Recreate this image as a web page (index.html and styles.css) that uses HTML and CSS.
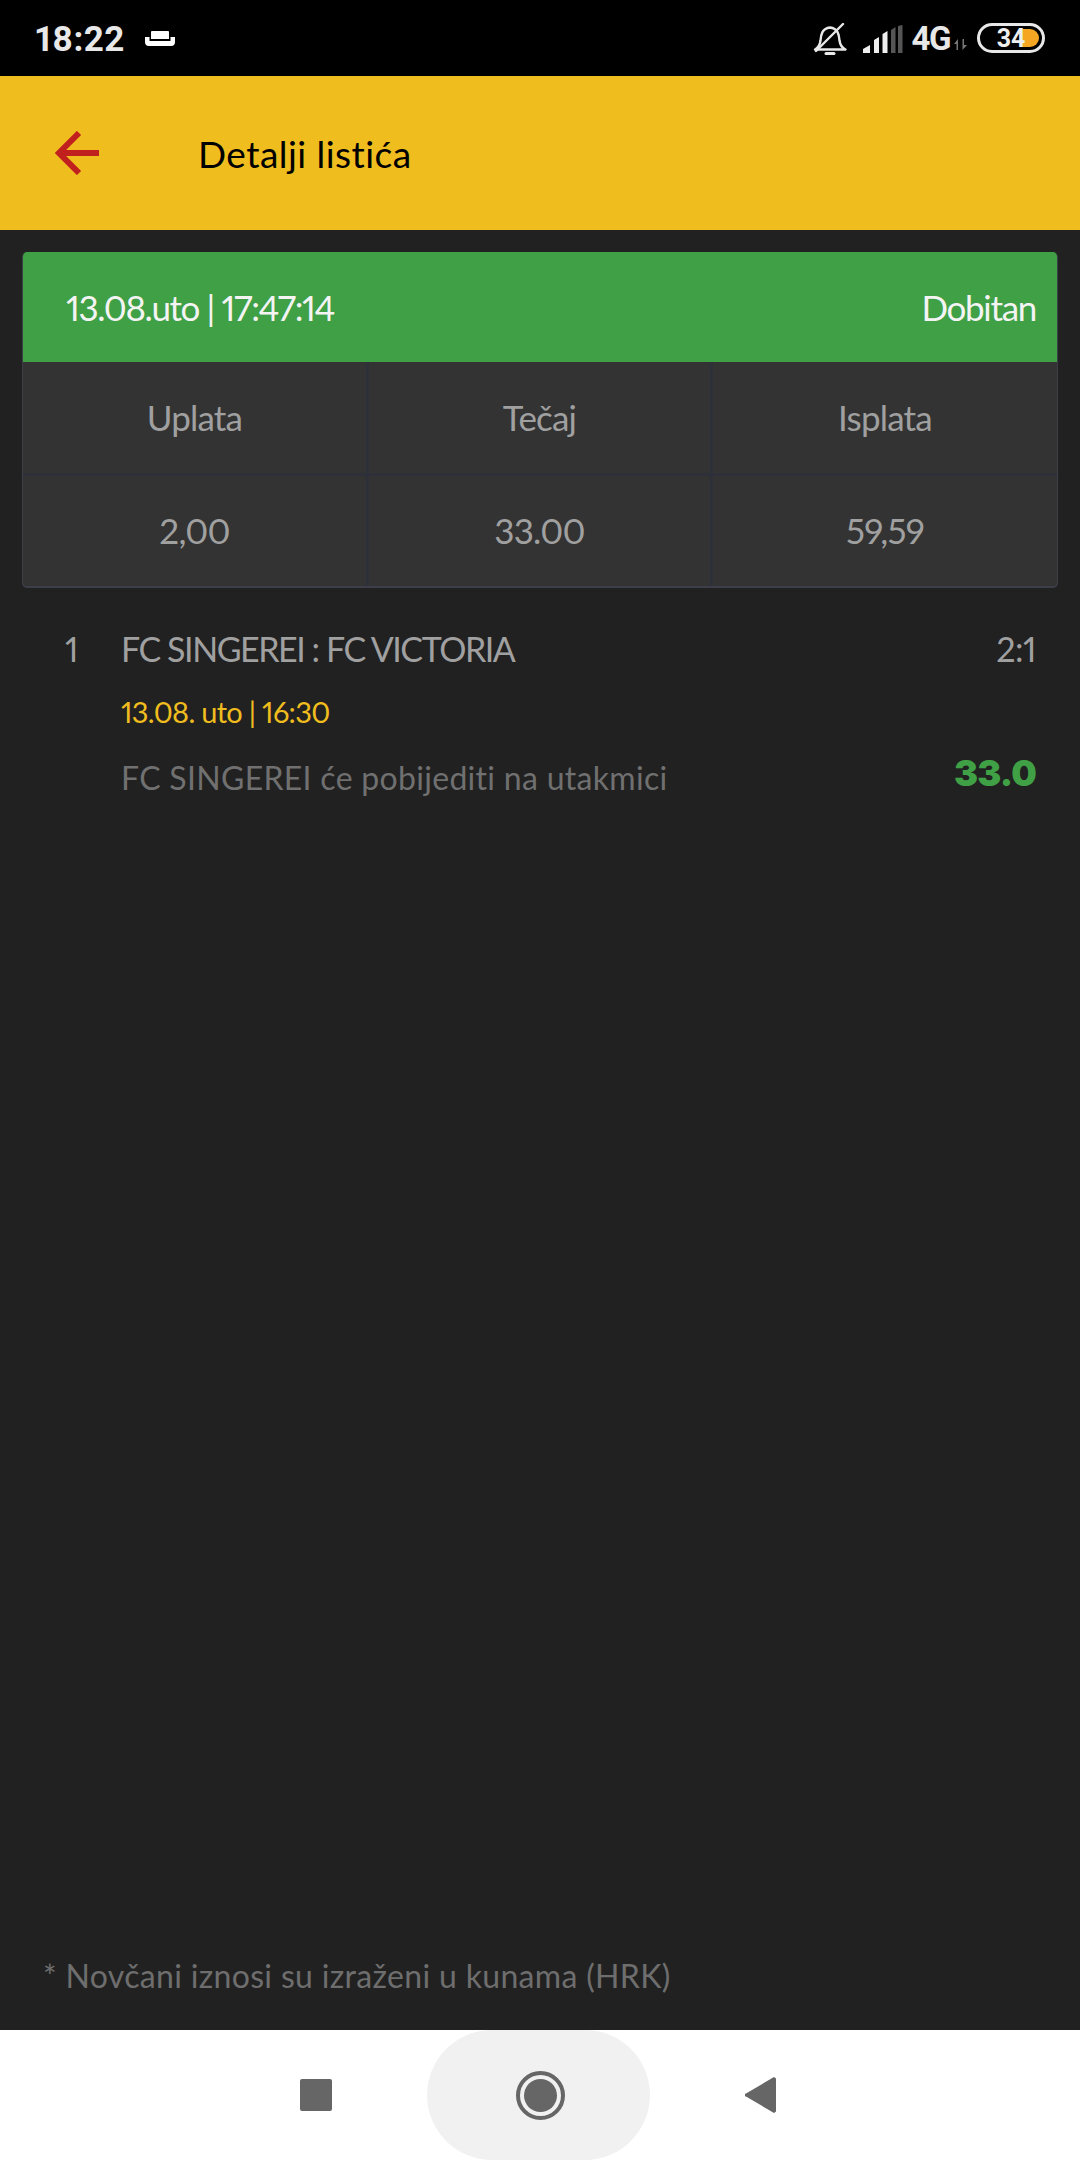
FILE: index.html
```html
<!DOCTYPE html>
<html lang="hr">
<head>
<meta charset="utf-8">
<title>Detalji listića</title>
<link rel="stylesheet" href="styles.css">
</head>
<body>
<div class="app">
  <div class="status">
    <div class="status-left">
      <span class="clock">18:22</span>
      <svg class="bed" width="30" height="15" viewBox="0 0 30 15"><path d="M6 1a1 1 0 0 1 1-1h16a1 1 0 0 1 1 1v7H6z" fill="#fff"/><path d="M0 6h4.500v4h21V6H30v5a4 4 0 0 1-4 4H4a4 4 0 0 1-4-4z" fill="#fff"/></svg>
    </div>
    <div class="status-right">
      <svg class="bell" width="34" height="32" viewBox="0 0 34 32" fill="none" stroke="#e8e8e8" stroke-width="2.400"><path d="M2 26.500c4-2 5-5 5.500-9 .5-6 1.500-12 9.500-13 8 1 9 7 9.500 13 .5 4 2 7 6 9z" stroke-linejoin="round"/><path d="M3 28 30 1" stroke-linecap="round"/><path d="M13 30.500h8" stroke-width="3" stroke-linecap="round"/></svg>
      <svg class="signal" width="40" height="28" viewBox="0 0 40 28"><path d="M0 28v-4l7-4v8zM11 28V15l5-3v16zM19.500 28V9l5-3v22z" fill="#eee"/><path d="M28 28V5l4.500-3v26zM35 28V1l4.500-1v28z" fill="#555"/></svg>
      <span class="net">4G</span>
      <svg class="updown" width="13" height="11" viewBox="0 0 13 11"><path d="M2.500 3v8h1.500V0L0 5h2.500zM8.500 0v11L13 6h-3V0z" fill="#777"/></svg>
      <div class="battery"><span class="batt-fill"></span><span class="batt-num">34</span></div>
    </div>
  </div>

  <header class="topbar">
    <svg class="back" width="44" height="44" viewBox="0 0 44 44" fill="none" stroke="#c0201e" stroke-width="6"><path d="M44 22H4"/><path d="M24 2 4 22 24 42"/></svg>
    <h1 class="title">Detalji listića</h1>
  </header>

  <main class="content">
    <section class="card">
      <div class="card-head">
        <span class="head-date">13.08.uto | 17:47:14</span>
        <span class="head-state">Dobitan</span>
      </div>
      <div class="grid">
        <div class="cell">Uplata</div>
        <div class="cell">Tečaj</div>
        <div class="cell">Isplata</div>
        <div class="cell">2,00</div>
        <div class="cell">33.00</div>
        <div class="cell">59,59</div>
      </div>
    </section>

    <section class="match">
      <span class="m-num">1</span>
      <div class="m-body">
        <div class="m-row">
          <span class="m-name">FC SINGEREI : FC VICTORIA</span>
          <span class="m-score">2:1</span>
        </div>
        <div class="m-date">13.08. uto | 16:30</div>
        <div class="m-row m-tip-row">
          <span class="m-tip">FC SINGEREI će pobijediti na utakmici</span>
          <span class="m-odd">33.0</span>
        </div>
      </div>
    </section>

    <p class="note">* Novčani iznosi su izraženi u kunama (HRK)</p>
  </main>

  <nav class="navbar">
    <span class="nav-square"></span>
    <div class="nav-pill"><span class="nav-ring"><span class="nav-dot"></span></span></div>
    <svg class="nav-back" width="31" height="36" viewBox="0 0 31 36"><path d="M31 1.500V34.500L29 36 1 19.500a1.500 1.500 0 0 1 0-3L29 0z" fill="#666"/></svg>
  </nav>
</div>
</body>
</html>
```
FILE: styles.css
```css
* { box-sizing: border-box; }
html, body { margin: 0; padding: 0; }
body { background: #212121; font-family: "Lato", "Liberation Sans", sans-serif; font-variant-numeric: proportional-nums; }
.app { width: 1080px; height: 2160px; display: flex; flex-direction: column; }

.status { height: 76px; flex: none; background: #000; display: flex; justify-content: space-between; align-items: center; padding: 0 35px 0 35px; }
.status-left { display: flex; align-items: center; gap: 20px; }
.clock { font-family: "Roboto", sans-serif; font-weight: 700; font-size: 35px; letter-spacing: .4px; color: #e8e8e8; margin-top: 2px; }
.status-right { display: flex; align-items: center; }
.bell { margin-right: 16px; margin-top: 2px; }
.signal { margin-right: 9px; margin-top: 1px; }
.net { font-family: "Roboto", sans-serif; font-weight: 700; font-size: 33px; letter-spacing: -1.500px; color: #e8e8e8; line-height: 1; }
.updown { margin: 13px 10px 0 4px; }
.battery { position: relative; width: 68px; height: 30px; border: 3px solid #e8e8e8; border-radius: 15px; display: flex; align-items: center; justify-content: center; overflow: hidden; }
.batt-fill { position: absolute; left: 41px; top: 3px; width: 18px; height: 18px; background: #f5a623; border-radius: 0 9px 9px 0; }
.batt-num { position: relative; font-family: "Roboto", sans-serif; font-weight: 700; font-size: 25px; color: #eee; line-height: 1; }

.topbar { height: 154px; flex: none; background: #f0bd1f; display: flex; align-items: center; padding-left: 55px; }
.title { margin: 0 0 0 99px; font-weight: 400; font-size: 37px; color: #000; letter-spacing: .45px; }

.content { flex: 1; display: flex; flex-direction: column; padding: 22px 22px 0; }
.card { border-radius: 5px; overflow: hidden; background: #333; border: solid #3c3f49; border-width: 0 1px 2px 1px; }
.card-head { height: 110px; margin: 0 -1px; background: #40a045; display: flex; justify-content: space-between; align-items: center; padding: 0 22px 0 44px; color: #f4f4f4; font-size: 35px; }
.head-date { letter-spacing: -1.400px; }
.head-state { letter-spacing: -1.300px; }
.grid { display: grid; grid-template-columns: 346px 344px 1fr; grid-template-rows: 114px 110px; }
.cell { display: flex; align-items: center; justify-content: center; padding-bottom: 2px; color: #a0a0a0; font-size: 35px; letter-spacing: -.8px; border-right: 3px solid #2e3039; border-bottom: 3px solid #2e3039; }
.cell:nth-child(3n) { border-right: 0; }
.cell:nth-child(n+4) { border-bottom: 0; }

.match { display: flex; margin-top: 38px; padding-right: 22px; }
.m-num { flex: none; width: 99px; padding-left: 43px; font-size: 34px; line-height: 46px; color: #a0a0a0; }
.m-body { flex: 1; display: flex; flex-direction: column; }
.m-row { display: flex; justify-content: space-between; align-items: center; }
.m-name { font-size: 34px; line-height: 46px; color: #a0a0a0; letter-spacing: -1.450px; }
.m-score { font-size: 34px; line-height: 46px; color: #a0a0a0; letter-spacing: -.5px; }
.m-date { margin-top: 20px; font-size: 29px; line-height: 40px; color: #f0bd1f; letter-spacing: -.7px; }
.m-tip-row { margin-top: 23px; }
.m-tip { font-size: 32px; line-height: 46px; color: #707070; letter-spacing: .3px; }
.m-odd { font-family: "Inter", "Lato", sans-serif; font-size: 36px; font-weight: 900; line-height: 40px; color: #40a045; margin-top: -10px; letter-spacing: -.8px; }

.note { margin: auto 0 34px; padding-left: 21px; font-size: 32px; line-height: 40px; color: #6e6e6e; letter-spacing: .33px; }

.navbar { height: 130px; flex: none; background: #fff; display: flex; align-items: center; padding-left: 300px; }
.nav-square { width: 32px; height: 32px; background: #666; border-radius: 2px; }
.nav-pill { width: 223px; height: 130px; margin-left: 95px; padding-left: 3px; background: #f1f1f1; border-radius: 65px; display: flex; align-items: center; justify-content: center; }
.nav-ring { width: 49px; height: 49px; border: 4px solid #666; border-radius: 50%; display: flex; align-items: center; justify-content: center; }
.nav-dot { width: 33px; height: 33px; background: #666; border-radius: 50%; }
.nav-back { margin-left: 95px; }
```
